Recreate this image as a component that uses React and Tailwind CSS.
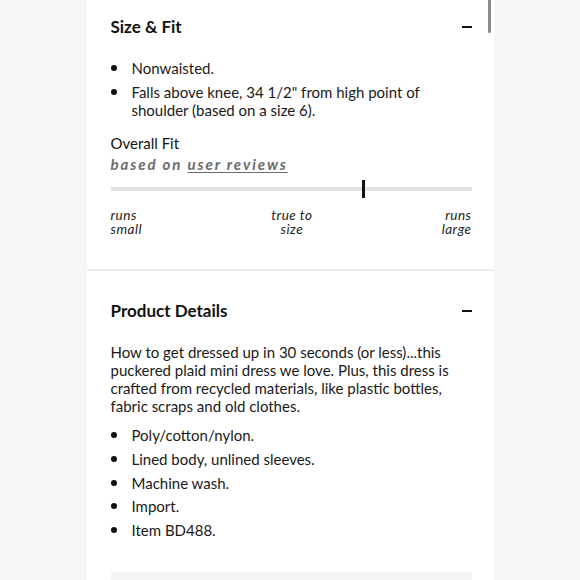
const FIT_NOTES = ['Nonwaisted.', 'Falls above knee, 34 1/2" from high point of shoulder (based on a size 6).'];

const DETAILS = ['Poly/cotton/nylon.', 'Lined body, unlined sleeves.', 'Machine wash.', 'Import.', 'Item BD488.'];

function SectionHeader({ title }) {
    return (
        <div className="flex h-6 items-center justify-between">
            <h3 className="text-[17px] font-bold leading-6 text-[#111]">{title}</h3>
            <span className="block h-[2px] w-[10px] bg-[#111]" />
        </div>
    );
}

function BulletList({ items, gap }) {
    return (
        <ul className={`flex flex-col ${gap}`}>
            {items.map((item) => (
                <li key={item} className="flex items-start text-[15px] leading-[18px] text-[#1a1a1a]">
                    <span className="mt-[6px] block h-[6px] w-[6px] shrink-0 rounded-full bg-[#111]" />
                    <span className="ml-[15px]">{item}</span>
                </li>
            ))}
        </ul>
    );
}

function FitMeter({ position }) {
    return (
        <div>
            <div className="relative mt-[6px] flex h-[18px] items-center">
                <div className="h-[4px] w-full bg-[#e3e3e3]" />
                <div className="absolute top-0 h-[18px] w-[3px] bg-[#111]" style={{ left: `${position}%` }} />
            </div>
            <div className="mt-[10px] flex justify-between text-[13.5px] italic leading-[14px] tracking-[0.5px] text-[#222]">
                <span>
                    runs
                    <br />
                    small
                </span>
                <span className="text-center">
                    true to
                    <br />
                    size
                </span>
                <span className="text-right">
                    runs
                    <br />
                    large
                </span>
            </div>
        </div>
    );
}

export default function App() {
    return (
        <div className="relative h-[580px] overflow-hidden bg-[#f6f6f6]" style={{ fontFamily: 'Lato, "Noto Sans", sans-serif' }}>
            <div className="mx-auto h-full w-[407px] bg-white">
                <section className="pl-6 pr-[22px] pb-[33px] pt-[15px]">
                    <SectionHeader title="Size & Fit" />
                    <div className="mt-[20px]">
                        <BulletList items={FIT_NOTES} gap="gap-[6px]" />
                    </div>
                    <div className="mt-[14px] text-[15px] leading-5 text-[#111]">Overall Fit</div>
                    <div className="mt-[1px] text-[15px] font-bold italic leading-5 tracking-[1.9px] text-[#6b6b6b]">
                        based on <span className="underline underline-offset-2">user reviews</span>
                    </div>
                    <FitMeter position={69.8} />
                </section>
                <div className="h-[2px] bg-[#ececec]" />
                <section className="pl-6 pr-[22px] pt-[28px]">
                    <SectionHeader title="Product Details" />
                    <p className="mt-[20px] text-[15px] leading-[18px] text-[#1a1a1a]">
                        How to get dressed up in 30 seconds (or less)...this puckered plaid mini dress we love. Plus, this dress is crafted from recycled materials, like plastic bottles, fabric scraps and old clothes.
                    </p>
                    <div className="mt-[11px]">
                        <BulletList items={DETAILS} gap="gap-[5.75px]" />
                    </div>
                    <div className="mt-[33px] h-12 bg-[#f5f5f5]" />
                </section>
            </div>
            <div className="absolute left-[488px] top-0 h-[33px] w-[3px] rounded-b-sm bg-[#8a8a8a]" />
        </div>
    );
}
